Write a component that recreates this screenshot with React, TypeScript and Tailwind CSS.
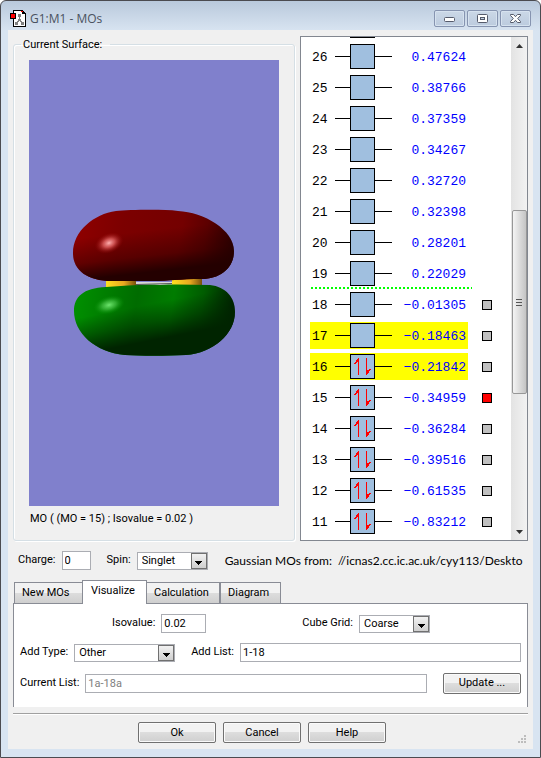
import React from 'react';

type Orbital = {
  n: number;
  energy: string;
  filled?: boolean;
  highlighted?: boolean;
  box?: 'gray' | 'red';
};

const ORBITALS: Orbital[] = [
  { n: 26, energy: '0.47624' },
  { n: 25, energy: '0.38766' },
  { n: 24, energy: '0.37359' },
  { n: 23, energy: '0.34267' },
  { n: 22, energy: '0.32720' },
  { n: 21, energy: '0.32398' },
  { n: 20, energy: '0.28201' },
  { n: 19, energy: '0.22029' },
  { n: 18, energy: '−0.01305', box: 'gray' },
  { n: 17, energy: '−0.18463', box: 'gray', highlighted: true },
  { n: 16, energy: '−0.21842', box: 'gray', highlighted: true, filled: true },
  { n: 15, energy: '−0.34959', box: 'red', filled: true },
  { n: 14, energy: '−0.36284', box: 'gray', filled: true },
  { n: 13, energy: '−0.39516', box: 'gray', filled: true },
  { n: 12, energy: '−0.61535', box: 'gray', filled: true },
  { n: 11, energy: '−0.83212', box: 'gray', filled: true },
];

function MoleculeIcon() {
  return (
    <svg width="16" height="17" viewBox="0 0 16 17" className="ml-[2px] shrink-0" shapeRendering="crispEdges" aria-hidden="true">
      <path d="M3.5 .5H12.5L15.5 3.5V16.5H3.5Z" fill="#fff" stroke="#000" />
      <path d="M12 1h1v1h1v1h1v1h-3z" fill="#000" />
      <path d="M11 1h2v1h-2z" fill="#f00" />
      <path d="M9 5h1v6H9zM7 11h2v1H7zM10 11h2v1h-2z" fill="#808080" />
      <path d="M8 4h3v3H8zM5 12h3v3H5zM11 12h3v3h-3zM8 9h3v2H8z" fill="#808080" />
      <path d="M.5 3.5H5.5V8.5H.5Z" fill="#f00" stroke="#000" />
    </svg>
  );
}

function CaptionButton({ label, children }: { label: string; children: React.ReactNode }) {
  return (
    <button
      aria-label={label}
      className="flex h-[17px] w-[31px] items-center justify-center rounded-[2px] border border-[#8694b0] bg-linear-to-b from-[#cbd8e7] to-[#bccbde] shadow-[inset_0_0_0_1px_#d6e2ef]"
    >
      {children}
    </button>
  );
}

const RED_LOBE =
  'M87 151C99 150 132 149 149 151C175 152 205 170 205 191C205 209 190 219 173 219C150 219 140 221 124 221L83 221C58 221 44 210 44 193C44 171 65 154 87 151Z';
const GREEN_LOBE =
  'M77 227C96 226 112 224 131 225C148 224 164 225 181 225C197 227 206 237 206 252C206 274 184 293 157 295C137 296 112 296 96 295C66 292 45 273 45 251C45 237 54 228 77 227Z';

function Surface() {
  return (
    <svg viewBox="0 0 250 446" className="block h-[446px] w-[250px] bg-[#8080cc]" role="img" aria-label="Molecular orbital 15">
      <defs>
        <linearGradient id="redBase" gradientUnits="userSpaceOnUse" x1="44" y1="160" x2="208" y2="190">
          <stop offset="0" stopColor="#900000" />
          <stop offset="0.3" stopColor="#7c0000" />
          <stop offset="0.65" stopColor="#740000" />
          <stop offset="0.8" stopColor="#5c0000" />
          <stop offset="1" stopColor="#240000" />
        </linearGradient>
        <linearGradient id="redShade" gradientUnits="userSpaceOnUse" x1="110" y1="150" x2="118" y2="221">
          <stop offset="0.3" stopColor="#240000" stopOpacity="0" />
          <stop offset="0.65" stopColor="#240000" stopOpacity="0.4" />
          <stop offset="0.88" stopColor="#240000" stopOpacity="1" />
        </linearGradient>
        <linearGradient id="greenBase" gradientUnits="userSpaceOnUse" x1="45" y1="240" x2="206" y2="266">
          <stop offset="0" stopColor="#009000" />
          <stop offset="0.38" stopColor="#006c00" />
          <stop offset="0.6" stopColor="#007c00" />
          <stop offset="0.78" stopColor="#005c00" />
          <stop offset="0.96" stopColor="#002400" />
        </linearGradient>
        <linearGradient id="greenShade" gradientUnits="userSpaceOnUse" x1="110" y1="224" x2="124" y2="295">
          <stop offset="0.3" stopColor="#002400" stopOpacity="0" />
          <stop offset="0.55" stopColor="#002400" stopOpacity="0.45" />
          <stop offset="0.8" stopColor="#002400" stopOpacity="1" />
        </linearGradient>
        <radialGradient id="redShine">
          <stop offset="0" stopColor="#ffb0b0" />
          <stop offset="0.4" stopColor="#e06060" stopOpacity="0.8" />
          <stop offset="1" stopColor="#900000" stopOpacity="0" />
        </radialGradient>
        <radialGradient id="greenShine">
          <stop offset="0" stopColor="#6ee66e" />
          <stop offset="0.45" stopColor="#3cb83c" stopOpacity="0.8" />
          <stop offset="1" stopColor="#008c00" stopOpacity="0" />
        </radialGradient>
        <linearGradient id="gold">
          <stop offset="0" stopColor="#ffe020" />
          <stop offset="0.6" stopColor="#e8a820" />
          <stop offset="1" stopColor="#76500c" />
        </linearGradient>
      </defs>
      <path d="M107 222H143V225H107Z" fill="#d8d8d8" />
      <path d="M107 224L143 223V224L107 225Z" fill="#555" />
      <path d="M77 220H107V228H77Z" fill="url(#gold)" />
      <path d="M143 218H173V227H143Z" fill="url(#gold)" />
      <path d={RED_LOBE} fill="url(#redBase)" />
      <path d={RED_LOBE} fill="url(#redShade)" />
      <ellipse cx="80" cy="183" rx="15" ry="10" transform="rotate(-22 80 183)" fill="url(#redShine)" />
      <path d={GREEN_LOBE} fill="url(#greenBase)" />
      <path d={GREEN_LOBE} fill="url(#greenShade)" />
      <ellipse cx="80" cy="245" rx="16" ry="9" transform="rotate(-15 80 245)" fill="url(#greenShine)" />
    </svg>
  );
}

function Electrons() {
  return (
    <svg width="23" height="23" viewBox="0 0 23 23" shapeRendering="crispEdges" aria-hidden="true">
      <path d="M7 3h1v17H7zM6 4h1v3H6zM5 5h1v3H5zM4 7h1v2H4zM3 8h1v1H3z" fill="#f00" />
      <path d="M15 3h1v17h-1zM16 15h1v4h-1zM17 15h1v3h-1zM18 14h1v2h-1zM19 14h1v1h-1z" fill="#f00" />
    </svg>
  );
}

function OrbitalRow({ o }: { o: Orbital }) {
  return (
    <div className="flex h-[27px] shrink-0 items-center font-['Liberation_Mono',monospace] text-[13px]">
      <div className={`flex h-full w-[158px] items-center ${o.highlighted ? 'bg-[#ffff00]' : ''}`}>
        <span className="w-[25px] pt-[2px] pl-[2px]">{o.n}</span>
        <span className="h-px w-[15px] bg-black" />
        <span className="h-[25px] w-[25px] border border-black bg-[#a0bfdf]">{o.filled && <Electrons />}</span>
        <span className="h-px w-[17px] bg-black" />
        <span className="flex-1 pt-[2px] pr-[2px] text-right text-[#0000ff]">{o.energy}</span>
      </div>
      {o.box && (
        <input
          type="checkbox"
          aria-label={`Surface for orbital ${o.n}`}
          className={`ml-[14px] h-[10px] w-[10px] appearance-none border border-black ${o.box === 'red' ? 'bg-[#ff0000]' : 'bg-[#c0c0c0]'}`}
        />
      )}
    </div>
  );
}

function OrbitalList() {
  return (
    <div className="flex h-[505px] w-[228px] shrink-0 overflow-hidden border border-[#828790] bg-white">
      <div className="flex flex-1 flex-col justify-end gap-1 pb-[5px] pl-[9px]">
        <div className="mb-px ml-[40px] h-px w-[25px] shrink-0 bg-black" />
        {ORBITALS.map((o) => (
          <React.Fragment key={o.n}>
            {o.n === 18 && (
              <div className="-my-1 ml-px h-1 w-[161px] shrink-0 bg-[repeating-linear-gradient(90deg,#00ff00_0_2px,transparent_2px_4px)] bg-[length:100%_2px] bg-no-repeat" />
            )}
            <OrbitalRow o={o} />
          </React.Fragment>
        ))}
      </div>
      <div className="flex w-4 flex-col items-center bg-linear-to-r from-[#e3e3e3] to-[#f2f2f2]">
        <button aria-label="Scroll up" className="flex h-[17px] w-full items-center justify-center">
          <svg width="7" height="4" viewBox="0 0 7 4"><path d="M0 4L3.500 0L7 4Z" fill="#333" /></svg>
        </button>
        <div className="h-[156px]" />
        <div className="flex h-[184px] w-[15px] flex-col items-center justify-center gap-px rounded-[2px] border border-[#979797] bg-linear-to-r from-[#f4f4f4] via-[#dcdcdc] to-[#c4c4c4]">
          <span className="h-px w-[6px] bg-[#555]" />
          <span className="mt-px h-px w-[6px] bg-[#555]" />
          <span className="mt-px h-px w-[6px] bg-[#555]" />
        </div>
        <button aria-label="Scroll down" className="mt-auto flex h-[17px] w-full items-center justify-center">
          <svg width="7" height="4" viewBox="0 0 7 4"><path d="M0 0L3.500 4L7 0Z" fill="#333" /></svg>
        </button>
      </div>
    </div>
  );
}

function Dropdown({ id, value, width }: { id: string; value: string; width: string }) {
  return (
    <div className={`grid h-[18px] border border-[#abadb3] bg-white ${width}`}>
      <select id={id} className="col-start-1 row-start-1 h-4 w-full appearance-none bg-transparent pl-1 leading-4 outline-none">
        <option>{value}</option>
      </select>
      <span className="pointer-events-none col-start-1 row-start-1 flex h-4 w-4 items-center justify-center justify-self-end border border-[#707070] bg-linear-to-b from-[#f2f2f2] to-[#cfcfcf] pt-1">
        <svg width="7" height="4" viewBox="0 0 7 4" shapeRendering="crispEdges"><path d="M0 0H7L3.500 4Z" fill="#000" /></svg>
      </span>
    </div>
  );
}

function TextField({ id, value, width, readOnly }: { id: string; value: string; width: string; readOnly?: boolean }) {
  return (
    <input
      id={id}
      defaultValue={value}
      readOnly={readOnly}
      className={`h-[19px] min-w-0 border border-[#abadb3] bg-white px-[2px] outline-none ${readOnly ? 'text-[#808080]' : ''} ${width}`}
    />
  );
}

function PushButton({ children }: { children: React.ReactNode }) {
  return (
    <button className="h-[21px] w-[78px] shrink-0 rounded-[2px] border border-[#707070] bg-[linear-gradient(#f2f2f2_0_50%,#dddddd_50%,#cfcfcf)] leading-4 shadow-[inset_0_0_0_1px_#fafafa]">
      {children}
    </button>
  );
}

function Tab({ label, width, selected }: { label: string; width: string; selected?: boolean }) {
  return (
    <button
      role="tab"
      aria-selected={!!selected}
      className={`border border-[#898c95] text-left ${width} ${
        selected
          ? 'z-10 h-[24px] border-b-0 bg-white pb-[2px] pl-2'
          : 'h-[22px] bg-[linear-gradient(#f2f2f2_0_50%,#dddddd_50%,#cfcfcf)] pl-[7px]'
      }`}
    >
      {label}
    </button>
  );
}

export default function App() {
  return (
    <div className="flex flex-col rounded-t-[6px] border border-[#4b4b50] bg-[linear-gradient(#b9c9dc,#d8e4f1_30px)] px-[7px] pb-2 font-[Roboto,'Liberation_Sans',sans-serif] text-[11px] text-black">
      <header className="flex h-[29px] items-center pt-[6px]">
        <MoleculeIcon />
        <h1 className="ml-1 font-['Open_Sans',sans-serif] text-[12px] text-[#4a5260]">G1:M1 - MOs</h1>
        <div className="mr-[2px] ml-auto flex gap-[2px]">
          <CaptionButton label="Minimize">
            <svg width="12" height="6" viewBox="0 0 12 6"><rect x=".5" y="1.500" width="10" height="4" rx="1" fill="#fff" stroke="#555b6b" /></svg>
          </CaptionButton>
          <CaptionButton label="Maximize">
            <svg width="12" height="10" viewBox="0 0 12 10"><rect x=".5" y=".5" width="10" height="8" rx="1" fill="#fff" stroke="#555b6b" /><rect x="3.500" y="3.500" width="4" height="2" fill="#c4d1e2" stroke="#555b6b" /></svg>
          </CaptionButton>
          <CaptionButton label="Close">
            <svg width="12" height="10" viewBox="0 0 12 10"><path d="M.5 .5H3.500L5.500 2.700L7.500 .5H10.500V1.500L7.700 4.500L10.500 7.500V8.500H7.500L5.500 6.300L3.500 8.500H.5V7.500L3.300 4.500L.5 1.500Z" fill="#fff" stroke="#555b6b" /></svg>
          </CaptionButton>
        </div>
      </header>

      <main className="flex flex-col bg-[#f0f0f0] px-[5px] pb-[6px]">
        <div className="flex justify-between pt-[6px]">
          <fieldset className="h-[505px] w-[282px] rounded-[3px] border border-[#d5dfe5] px-[15px] shadow-[inset_1px_1px_0_#fff,1px_1px_0_#fff]">
            <legend className="-ml-2 h-4 pr-[8px] pl-[2px] leading-[18px]">Current Surface:</legend>
            <div className="pt-2">
              <Surface />
            </div>
            <p className="pt-1 pl-px leading-[18px]">MO ( (MO = 15) ; Isovalue = 0.02 )</p>
          </fieldset>
          <OrbitalList />
        </div>

        <div className="flex h-[39px] items-center pl-[5px]">
          <label htmlFor="charge">Charge:</label>
          <TextField id="charge" value="0" width="ml-[6px] w-[29px]" />
          <label htmlFor="spin" className="ml-4">Spin:</label>
          <Dropdown id="spin" value="Singlet" width="ml-[6px] w-[71px]" />
          <p className="ml-[17px] font-[Lato,sans-serif] text-[12px] whitespace-pre">Gaussian MOs from:  //icnas2.cc.ic.ac.uk/cyy113/Deskto</p>
        </div>

        <div role="tablist" className="flex h-6 items-end">
          <Tab label="New MOs" width="ml-px w-[69px]" />
          <Tab label="Visualize" width="-ml-px w-[65px]" selected />
          <Tab label="Calculation" width="-ml-px w-[74px]" />
          <Tab label="Diagram" width="w-[61px]" />
        </div>
        <section className="-mt-px flex h-[104px] flex-col border-x border-t border-[#898c95] bg-white pr-[6px] pl-[6px]">
          <div className="flex h-[39px] items-center pl-[92px]">
            <label htmlFor="isovalue">Isovalue:</label>
            <TextField id="isovalue" value="0.02" width="ml-[6px] w-[45px]" />
            <label htmlFor="grid" className="ml-auto">Cube Grid:</label>
            <Dropdown id="grid" value="Coarse" width="ml-[6px] mr-[91px] w-[71px]" />
          </div>
          <div className="flex h-[19px] items-center">
            <label htmlFor="type">Add Type:</label>
            <Dropdown id="type" value="Other" width="ml-[6px] w-[101px]" />
            <label htmlFor="list" className="ml-4">Add List:</label>
            <TextField id="list" value="1-18" width="ml-[6px] flex-1" />
          </div>
          <div className="mt-[10px] flex h-[22px] items-center">
            <label htmlFor="current">Current List:</label>
            <TextField id="current" value="1a-18a" width="ml-[6px] mr-4 flex-1" readOnly />
            <PushButton>Update ...</PushButton>
          </div>
        </section>

        <hr className="mt-[6px] h-[2px] border-t border-b border-t-[#a0a0a0] border-b-white" />
        <footer className="flex items-end justify-between pt-[7px]">
          <div className="flex gap-[7px] pl-[125px]">
            <PushButton>Ok</PushButton>
            <PushButton>Cancel</PushButton>
            <PushButton>Help</PushButton>
          </div>
          <svg width="8" height="8" viewBox="0 0 8 8" className="mr-[2px]" aria-hidden="true">
            <path d="M6 0h2v2H6zM3 3h2v2H3zM6 3h2v2H6zM0 6h2v2H0zM3 6h2v2H3zM6 6h2v2H6z" fill="#bdbdbd" />
          </svg>
        </footer>
      </main>
    </div>
  );
}
